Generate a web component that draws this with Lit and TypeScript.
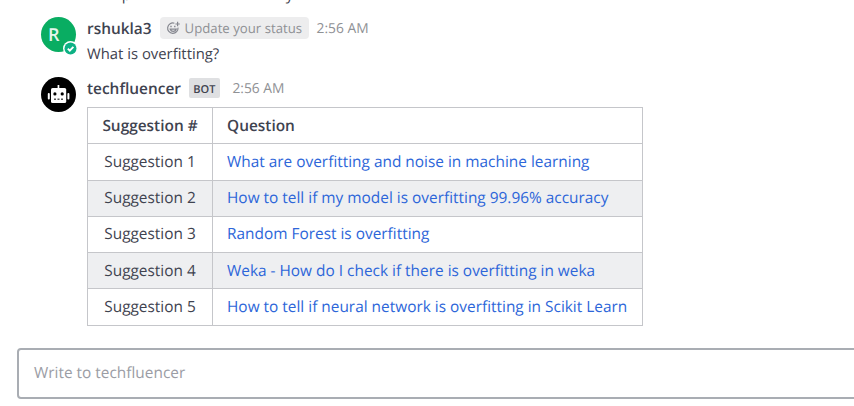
import { LitElement, html, css, svg } from "lit";
import { customElement } from "lit/decorators.js";

const suggestions = [
  "What are overfitting and noise in machine learning",
  "How to tell if my model is overfitting 99.96% accuracy",
  "Random Forest is overfitting",
  "Weka - How do I check if there is overfitting in weka",
  "How to tell if neural network is overfitting in Scikit Learn",
];

const robot = svg`
  <circle cx="17.5" cy="17.5" r="17.5" fill="#000"/>
  <g fill="#fff">
    <rect x="16.6" y="8" width="1.7" height="4"/>
    <rect x="10" y="11" width="15.2" height="15" rx="1.6"/>
    <rect x="6.8" y="16" width="2" height="6.4" rx=".9"/>
    <rect x="26.4" y="16" width="2" height="6.4" rx=".9"/>
  </g>
  <circle cx="13.9" cy="16.9" r="1.6"/>
  <circle cx="21.2" cy="16.9" r="1.6"/>
  <path d="M13 22.3h2M16.5 22.3h2M20 22.3h2" stroke="#555" stroke-width="1.6"/>`;

@customElement("app-root")
export class AppRoot extends LitElement {
  static styles = css`
    :host {
      display: flex;
      flex-direction: column;
      box-sizing: border-box;
      height: 406px;
      overflow: hidden;
      background: #fff;
      color: #3f4350;
      font: 15.42px/20px "Open Sans", sans-serif;
      text-rendering: geometricPrecision;
    }
    .earlier {
      height: 4px;
      padding-left: 114px;
      display: flex;
      align-items: flex-end;
      overflow: hidden;
      font-size: 15px;
    }
    .earlier span { margin-bottom: -1px; width: 164px; white-space: pre; }
    .post { display: flex; padding-left: 41px; }
    .first { margin-top: 13px; height: 60px; }
    .second { height: 249px; }
    .avatar { position: relative; width: 35px; height: 35px; flex: none; }
    .avatar svg { display: block; }
    .letter {
      width: 35px;
      height: 35px;
      box-sizing: border-box;
      padding-left: 7px;
      border-radius: 50%;
      background: #09ad62;
      color: #e4f6ed;
      font-size: 18px;
      font-weight: 600;
      line-height: 36px;
    }
    .online { position: absolute; left: 21px; top: 23px; }
    .body { margin-left: 11px; }
    .head { display: flex; align-items: center; height: 22px; white-space: nowrap; }
    .name { font-weight: 600; margin-top: 1px; }
    .status {
      display: flex;
      align-items: center;
      box-sizing: border-box;
      width: 149px;
      height: 22px;
      margin-left: 8px;
      padding-left: 6px;
      border-radius: 4px;
      background: #ededee;
      color: #8f9195;
      font-size: 13.2px;
    }
    .status svg { margin-right: 4px; flex: none; }
    .time { margin: 2px 0 0 8px; color: #8f9195; font-size: 13.8px; }
    .bot {
      box-sizing: border-box;
      width: 31px;
      height: 20px;
      margin-left: 8px;
      border-radius: 2px;
      background: #dfe0e2;
      font-size: 11px;
      font-weight: 600;
      line-height: 23px;
      text-align: center;
    }
    .second .time { margin-left: 12.5px; }
    .message { margin-top: 5px; white-space: nowrap; font-size: 14.85px; }
    .table {
      display: grid;
      grid-template-columns: 125px 430px;
      grid-template-rows: 36px 37px 36px 36px 36px 38px;
      margin-top: 8px;
      width: 555px;
      border: solid #c5c6ca;
      border-width: 0 0 0 1px;
    }
    .cell {
      box-sizing: border-box;
      border: solid #c5c6ca;
      border-width: 1px 1px 0 0;
      padding: 8px 0 0 14px;
      white-space: nowrap;
      overflow: hidden;
    }
    .cell.num { padding-left: 0; text-align: center; }
    .cell.th { font-weight: 600; }
    .cell.alt { background: #eeeff1; }
    .cell.raised { padding-top: 7px; }
    .cell.last { border-bottom-width: 1px; }
    .cell.link { color: #2d66d9; }
    .composer {
      box-sizing: border-box;
      flex: none;
      height: 51px;
      margin: 22px -10px 0 17px;
      padding: 13px 0 0 15px;
      border: 2px solid #a9adb3;
      border-radius: 4px;
      color: #9b9da5;
    }
  `;

  render() {
    const last = suggestions.length - 1;
    return html`
      <div class="earlier"><span>  p</span><span>  y</span></div>
      <div class="post first">
        <div class="avatar">
          <div class="letter">R</div>
          <svg class="online" width="16" height="16" viewBox="0 0 16 16">
            <circle cx="8.5" cy="8.5" r="7.5" fill="#fff"/>
            <circle cx="8.5" cy="8.5" r="6" fill="#0db184"/>
            <path d="M5.8 8.6l2 2 3.6-3.8" fill="none" stroke="#fff" stroke-width="1.9"/>
          </svg>
        </div>
        <div class="body">
          <div class="head">
            <span class="name">rshukla3</span>
            <span class="status">
              <svg width="15" height="14" viewBox="0 0 15 14" fill="none" stroke="#85878f" stroke-width="1.2">
                <path d="M8.4 2.2A5.2 5.2 0 1 0 12 6.6M11.6 .8v4.4M9.4 3h4.4M4.2 8.2c1 2.8 5 2.8 6 0z"/>
                <path d="M5 4.8v1.5M8.8 4.8v1.5" stroke-width="1.4"/>
              </svg>
              <span>Update your status</span>
            </span>
            <span class="time">2:56 AM</span>
          </div>
          <div class="message">What is overfitting?</div>
        </div>
      </div>
      <div class="post second">
        <div class="avatar"><svg width="35" height="35" viewBox="0 0 35 35">${robot}</svg></div>
        <div class="body">
          <div class="head">
            <span class="name">techfluencer</span>
            <span class="bot">BOT</span>
            <span class="time">2:56 AM</span>
          </div>
          <div class="table">
            <div class="cell num th">Suggestion #</div>
            <div class="cell th">Question</div>
            ${suggestions.map((question, i) => {
              const row = `${i % 2 ? "alt" : ""} ${i === 1 || i === 2 ? "raised" : ""} ${i === last ? "last" : ""}`;
              return html`
                <div class="cell num ${row}">Suggestion ${i + 1}</div>
                <div class="cell link ${row}">${question}</div>`;
            })}
          </div>
        </div>
      </div>
      <div class="composer">Write to techfluencer</div>
    `;
  }
}
